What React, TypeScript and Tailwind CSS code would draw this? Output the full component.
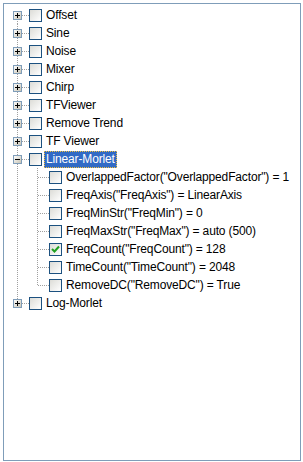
import React from "react";

type Node = {
  label: string;
  expanded?: boolean;
  selected?: boolean;
  children?: { label: string; checked?: boolean }[];
};

const nodes: Node[] = [
  { label: "Offset" },
  { label: "Sine" },
  { label: "Noise" },
  { label: "Mixer" },
  { label: "Chirp" },
  { label: "TFViewer" },
  { label: "Remove Trend" },
  { label: "TF Viewer" },
  {
    label: "Linear-Morlet",
    expanded: true,
    selected: true,
    children: [
      { label: 'OverlappedFactor("OverlappedFactor") = 1' },
      { label: 'FreqAxis("FreqAxis") = LinearAxis' },
      { label: 'FreqMinStr("FreqMin") = 0' },
      { label: 'FreqMaxStr("FreqMax") = auto (500)' },
      { label: 'FreqCount("FreqCount") = 128', checked: true },
      { label: 'TimeCount("TimeCount") = 2048' },
      { label: 'RemoveDC("RemoveDC") = True' },
    ],
  },
  { label: "Log-Morlet" },
];

const DOT = "#a0a0a0";

function RootGutter({ first, last, expanded, showBox = true }: { first?: boolean; last?: boolean; expanded?: boolean; showBox?: boolean }) {
  return (
    <svg width="22" height="18" className="shrink-0" shapeRendering="crispEdges">
      <defs>
        <linearGradient id="exp" x1="0" y1="0" x2="1" y2="1">
          <stop offset="0" stopColor="#ffffff" />
          <stop offset="1" stopColor="#c6c2b2" />
        </linearGradient>
      </defs>
      <line x1="10.5" x2="10.5" y1={first ? 9 : 0} y2={last ? 9 : 18} stroke={DOT} strokeDasharray="1 1" />
      {showBox && (
        <>
          <line x1="11" x2="22" y1="9.5" y2="9.5" stroke={DOT} strokeDasharray="1 1" />
          <rect x="6.5" y="5.5" width="8" height="8" fill="url(#exp)" stroke="#7f9db9" />
          <line x1="8" x2="13" y1="9.5" y2="9.5" stroke="#000" />
          {!expanded && <line x1="10.5" x2="10.5" y1="7" y2="12" stroke="#000" />}
        </>
      )}
    </svg>
  );
}

function ChildGutter({ last }: { last?: boolean }) {
  return (
    <svg width="20" height="18" className="shrink-0" shapeRendering="crispEdges">
      <line x1="8.5" x2="8.5" y1="0" y2={last ? 10 : 18} stroke={DOT} strokeDasharray="1 1" />
      <line x1="9" x2="20" y1="9.5" y2="9.5" stroke={DOT} strokeDasharray="1 1" />
    </svg>
  );
}

function Checkbox({ checked }: { checked?: boolean }) {
  return (
    <div className="w-[13px] h-[13px] shrink-0 border border-[#1c5180] bg-gradient-to-br from-[#dcdcd7] to-white flex items-center justify-center">
      {checked && (
        <svg width="9" height="9" viewBox="0 0 9 9">
          <path d="M1 4 L3.5 6.5 L8 1.5" fill="none" stroke="#21a121" strokeWidth="2" />
        </svg>
      )}
    </div>
  );
}

function Label({ text, selected }: { text: string; selected?: boolean }) {
  return (
    <span
      className={
        "ml-[2px] h-[17px] flex items-center px-[1px] whitespace-nowrap border border-dotted " +
        (selected ? "bg-[#316ac5] text-white border-[#f0c040]" : "text-black border-transparent")
      }
    >
      {text}
    </span>
  );
}

export default function App() {
  return (
    <div className="w-[303px] h-[462px] bg-white pt-[3px] pl-[3px]">
      <div
        className="w-[298px] h-[458px] border border-[#7f9db9] pt-[2px] pl-[3px] text-[12px] leading-none tracking-[-0.15px]"
        style={{ fontFamily: '"Liberation Sans", Arial, sans-serif' }}
      >
        {nodes.map((n, i) => (
          <div key={n.label}>
            <div className="flex items-center h-[18px]">
              <RootGutter first={i === 0} last={i === nodes.length - 1} expanded={n.expanded} />
              <Checkbox />
              <Label text={n.label} selected={n.selected} />
            </div>
            {n.expanded &&
              n.children?.map((c, j) => (
                <div key={c.label} className="flex items-center h-[18px]">
                  <RootGutter showBox={false} />
                  <ChildGutter last={j === (n.children?.length ?? 0) - 1} />
                  <Checkbox checked={c.checked} />
                  <Label text={c.label} />
                </div>
              ))}
          </div>
        ))}
      </div>
    </div>
  );
}
